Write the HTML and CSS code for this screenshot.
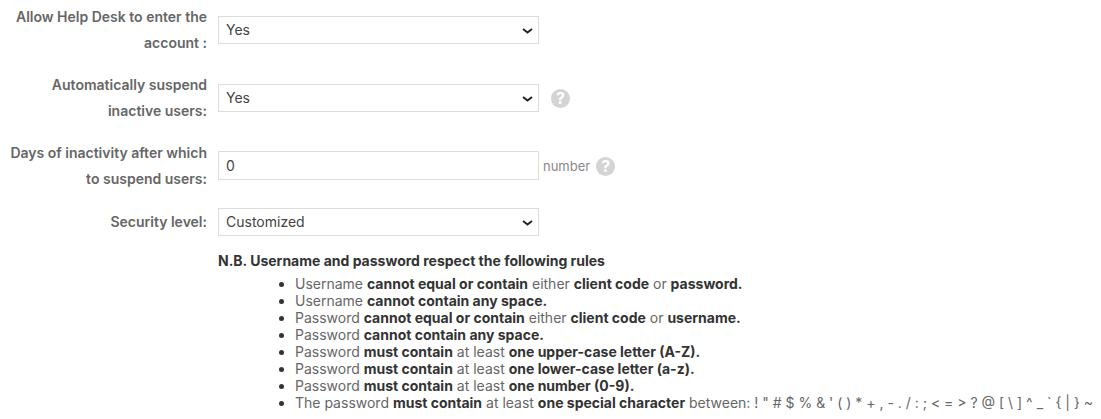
FILE: index.html
```html
<!DOCTYPE html>
<html lang="en">
<head>
    <meta charset="UTF-8">
    <meta name="viewport" content="width=device-width, initial-scale=1.0">
    <title>Security settings</title>
    <link rel="stylesheet" href="styles.css">
</head>
<body>
    <form class="settings">
        <div class="form-row">
            <label class="form-label" for="helpDesk">Allow Help Desk to enter the account :</label>
            <select class="form-control" id="helpDesk">
                <option>Yes</option>
            </select>
        </div>

        <div class="form-row">
            <label class="form-label" for="suspend">Automatically suspend inactive users:</label>
            <select class="form-control" id="suspend">
                <option>Yes</option>
            </select>
            <span class="help help-select">?</span>
        </div>

        <div class="form-row">
            <label class="form-label" for="days">Days of inactivity after which to suspend users:</label>
            <input class="form-control form-input" type="text" id="days" value="0">
            <span class="hint">number</span>
            <span class="help">?</span>
        </div>

        <div class="form-row">
            <label class="form-label" for="level">Security level:</label>
            <select class="form-control" id="level">
                <option>Customized</option>
            </select>
        </div>
    </form>

    <div class="rules">
        <h4>N.B. Username and password respect the following rules</h4>
        <ul>
            <li>Username <b>cannot equal or contain</b> either <b>client code</b> or <b>password.</b></li>
            <li>Username <b>cannot contain any space.</b></li>
            <li>Password <b>cannot equal or contain</b> either <b>client code</b> or <b>username.</b></li>
            <li>Password <b>cannot contain any space.</b></li>
            <li>Password <b>must contain</b> at least <b>one upper-case letter (A-Z).</b></li>
            <li>Password <b>must contain</b> at least <b>one lower-case letter (a-z).</b></li>
            <li>Password <b>must contain</b> at least <b>one number (0-9).</b></li>
            <li>The password <b>must contain</b> at least <b>one special character</b> between: ! " # $ % &amp; ' ( ) * + , - . / : ; &lt; = &gt; ? @ [ \ ] ^ _ ` { | } ~</li>
        </ul>
    </div>
</body>
</html>
```

FILE: styles.css
```css
* {
    margin: 0;
    padding: 0;
    box-sizing: border-box;
}

body {
    font-family: Inter, "Liberation Sans", sans-serif;
    font-size: 14px;
    color: #555;
    background: #fff;
    padding-top: 4px;
    overflow: hidden;
}

.settings {
    display: flex;
    flex-direction: column;
    gap: 16px;
}

.form-row {
    display: flex;
    align-items: center;
}

.form-label {
    width: 207px;
    flex-shrink: 0;
    margin-right: 11px;
    text-align: right;
    font-weight: 600;
    line-height: 26px;
    color: #666;
}

.form-control {
    width: 321px;
    height: 28px;
    padding: 0 7px;
    border: 1px solid #ddd;
    border-radius: 0;
    background: #fff;
    font-family: inherit;
    font-size: 14px;
    color: #444;
}

select.form-control {
    appearance: none;
    padding-bottom: 1px;
    background: #fff url("data:image/svg+xml,%3Csvg xmlns='http://www.w3.org/2000/svg' width='11' height='6' viewBox='0 0 11 6'%3E%3Cpath d='M1 1l4.5 3.6L10 1' fill='none' stroke='%23222' stroke-width='1.9'/%3E%3C/svg%3E") no-repeat right 5px top 11px;
}

.form-input {
    height: 29px;
    margin-bottom: 1px;
}

.hint {
    margin-left: 4px;
    font-size: 13px;
    color: #888;
}

.help {
    width: 19px;
    height: 19px;
    margin-left: 6px;
    border-radius: 50%;
    background: #d4d4d4;
    color: #fff;
    font-size: 16px;
    font-weight: 700;
    line-height: 19px;
    text-align: center;
}

.help-select {
    margin-left: 12px;
}

.rules {
    margin-top: 16px;
    margin-left: 218px;
}

.rules h4 {
    font-size: 14px;
    font-weight: 700;
    line-height: 17px;
    color: #333;
    margin-bottom: 6px;
}

.rules ul {
    margin-left: 77px;
    font-size: 14px;
    line-height: 17px;
    color: #666;
}

.rules li {
    white-space: nowrap;
}

.rules li::marker {
    color: #333;
}

.rules b {
    font-weight: 700;
    color: #333;
}
```
